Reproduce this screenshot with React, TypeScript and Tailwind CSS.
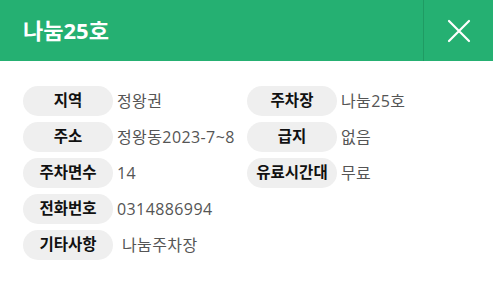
import React from "react";

type Item = {
  label: string;
  value: string;
  indent?: boolean;
};

const rows: Item[][] = [
  [
    { label: "지역", value: "정왕권" },
    { label: "주차장", value: "나눔25호" },
  ],
  [
    { label: "주소", value: "정왕동2023-7~8" },
    { label: "급지", value: "없음" },
  ],
  [
    { label: "주차면수", value: "14" },
    { label: "유료시간대", value: "무료" },
  ],
  [{ label: "전화번호", value: "0314886994" }],
  [{ label: "기타사항", value: "나눔주차장", indent: true }],
];

const Field: React.FC<{ item: Item }> = ({ item }) => (
  <div className="flex items-center">
    <span className="flex h-[30px] w-[90px] shrink-0 items-center justify-center rounded-full bg-[#efefef] text-[15.5px] font-bold text-[#111]">
      {item.label}
    </span>
    <span
      className={
        item.indent
          ? "ml-[9px] whitespace-nowrap text-[16px] tracking-[0.4px] text-[#555]"
          : "ml-[4px] whitespace-nowrap text-[16px] tracking-[0.4px] text-[#555]"
      }
    >
      {item.value}
    </span>
  </div>
);

export default function App() {
  return (
    <div
      className="h-[287px] w-[493px] bg-white"
      style={{ fontFamily: '"Open Sans", "Noto Sans CJK KR", sans-serif' }}
    >
      <div className="flex h-[61px] items-stretch bg-[#25b072]">
        <h1 className="flex flex-1 items-center pl-[23px] text-[22px] font-bold text-white">
          나눔25호
        </h1>
        <button className="flex w-[70px] items-center justify-center border-l border-[#1f9b63]">
          <svg width="24" height="24" viewBox="0 0 24 24" fill="none">
            <path d="M2 2 L22 22 M22 2 L2 22" stroke="white" strokeWidth="2.2" strokeLinecap="round" />
          </svg>
        </button>
      </div>
      <div className="flex flex-col gap-[6px] pl-[23px] pt-[25px]">
        {rows.map((row, i) => (
          <div key={i} className="grid grid-cols-[224px_1fr]">
            {row.map((item) => (
              <Field key={item.label} item={item} />
            ))}
          </div>
        ))}
      </div>
    </div>
  );
}
